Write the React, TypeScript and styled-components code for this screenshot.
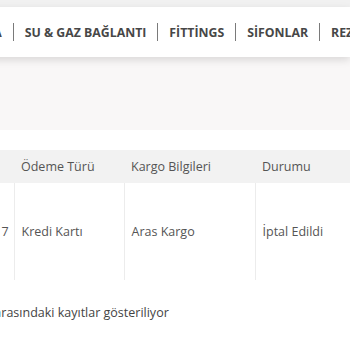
import React from "react";
import styled, { createGlobalStyle } from "styled-components";

const Global = createGlobalStyle`
  html, body { margin: 0; padding: 0; background: #fff; overflow: hidden; }
  body { font-family: "Open Sans", "Noto Sans", sans-serif; width: 350px; height: 350px; }
`;

const Page = styled.div`
  width: 350px;
  height: 350px;
  overflow: hidden;
  background: #fff;
`;

const TopStrip = styled.div`
  height: 7px;
  background: #f1f1f1;
`;

const Nav = styled.nav`
  position: relative;
  height: 50px;
  background: #fff;
  display: flex;
  align-items: center;
  margin-left: -129px;
  white-space: nowrap;
  box-shadow: 0 3px 8px rgba(0, 0, 0, 0.13);
  z-index: 1;
`;

const NavItem = styled.span`
  font-weight: 700;
  font-size: 12.3px;
  color: #474747;
  padding: 0 11px;
`;

const Sep = styled.span`
  width: 1px;
  height: 18px;
  background: #7a7a7a;
  flex: none;
`;

const Band = styled.div`
  height: 73px;
  background: #f9f7f7;
`;

const TableWrap = styled.div`
  margin-top: 20px;
  margin-left: -62px;
`;

const Table = styled.table`
  border-collapse: collapse;
  table-layout: fixed;
  width: 437px;
  font-size: 12.5px;
  color: #555;
  white-space: nowrap;
`;

const Th = styled.th`
  box-sizing: border-box;
  height: 33px;
  background: #f2f2f2;
  text-align: left;
  font-weight: 400;
  padding: 0 7px;
  color: #555;
`;

const Td = styled.td<{ first?: boolean }>`
  height: 97px;
  padding: 0 7px;
  vertical-align: middle;
  border-left: ${(p) => (p.first ? "none" : "1px solid #ececec")};
`;

const Footer = styled.div`
  margin-top: 24px;
  margin-left: -43px;
  font-size: 12.5px;
  color: #444;
  white-space: nowrap;
`;

const navItems = ["ISITMA & SOĞUTMA", "SU & GAZ BAĞLANTI", "FİTTİNGS", "SİFONLAR", "REZERVUARLAR"];
const colWidths = [76, 110, 131, 120];

export default function App() {
  return (
    <Page>
      <Global />
      <TopStrip />
      <Nav>
        {navItems.map((n, i) => (
          <React.Fragment key={n}>
            {i > 0 && <Sep />}
            <NavItem>{n}</NavItem>
          </React.Fragment>
        ))}
      </Nav>
      <Band />
      <TableWrap>
        <Table>
          <colgroup>
            {colWidths.map((w, i) => (
              <col key={i} style={{ width: w }} />
            ))}
          </colgroup>
          <thead>
            <tr>
              <Th>Tarih</Th>
              <Th>Ödeme Türü</Th>
              <Th>Kargo Bilgileri</Th>
              <Th>Durumu</Th>
            </tr>
          </thead>
          <tbody>
            <tr>
              <Td first>12.03.2017</Td>
              <Td>Kredi Kartı</Td>
              <Td>Aras Kargo</Td>
              <Td>İptal Edildi</Td>
            </tr>
          </tbody>
        </Table>
      </TableWrap>
      <Footer>1 ile 1 arasındaki kayıtlar gösteriliyor</Footer>
    </Page>
  );
}
